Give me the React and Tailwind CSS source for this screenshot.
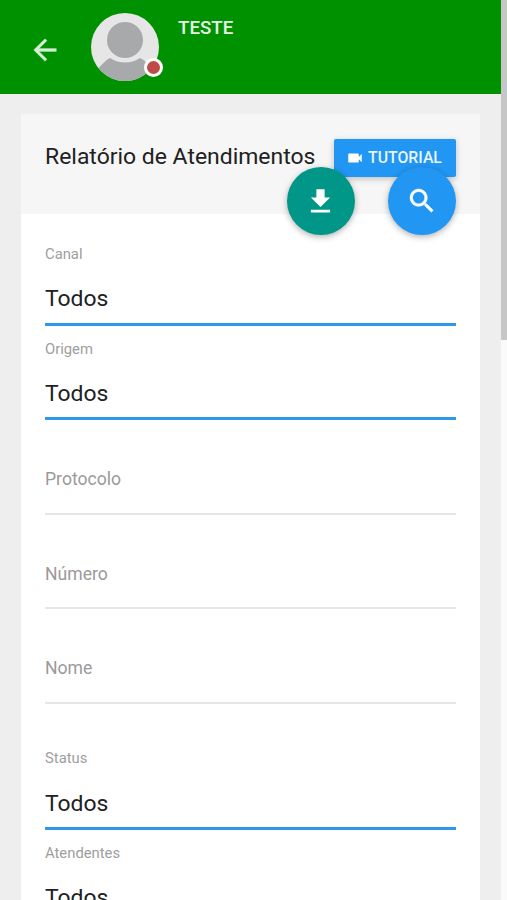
import React from 'react';
import { MdVideocam } from 'react-icons/md';

const fields = [
  { label: 'Canal', type: 'select' },
  { label: 'Origem', type: 'select' },
  { label: 'Protocolo', type: 'text' },
  { label: 'Número', type: 'text' },
  { label: 'Nome', type: 'text' },
  { label: 'Status', type: 'select', spaced: true },
  { label: 'Atendentes', type: 'select' },
];

const SelectField = ({ label, spaced }) => (
  <div className={`h-[94.6px] shrink-0 border-b-3 border-[#2f98ea] pt-[13px] ${spaced ? 'mt-[31.4px]' : ''}`}>
    <label className="block h-5 text-[14.8px] leading-5 text-[#9e9e9e]">{label}</label>
    <div className="mt-[20.3px] text-[22.9px] leading-[30px] text-[#212121]">Todos</div>
  </div>
);

const TextField = ({ label }) => (
  <div className="h-[94.6px] shrink-0 border-b-2 border-[#e6e6e6] pt-[47px]">
    <label className="block text-[17.6px] leading-6 text-[#9a9a9a]">{label}</label>
  </div>
);

const Avatar = () => (
  <div className="relative mt-[13px] ml-[33px] h-[68px] w-[68px]">
    <svg className="h-full w-full" viewBox="0 0 68 68">
      <defs>
        <clipPath id="avatar">
          <circle cx="34" cy="34" r="34" />
        </clipPath>
      </defs>
      <g clipPath="url(#avatar)">
        <rect width="68" height="68" fill="#e6e6e6" />
        <path d="M7 56C11 51 15 47 19 45C28 51 40 51 49 45C53 47 58 51 61 56V68H7Z" fill="#a7a9ab" />
        <circle cx="34" cy="27" r="18" fill="#a7a9ab" />
      </g>
    </svg>
    <span className="absolute top-[44.5px] left-[52.5px] h-[19px] w-[19px] rounded-full border-3 border-white bg-[#c04a45]"></span>
  </div>
);

const App = () => {
  return (
    <div className="flex h-screen overflow-hidden bg-[#eeeeee] font-['Roboto',sans-serif]">
      <div className="flex min-w-0 flex-1 flex-col">
        <header className="flex h-[94px] shrink-0 bg-[#009100] text-white">
          <button type="button" className="mt-[33px] ml-7 h-[34px] w-[34px] text-[#d6efd6]">
            <svg className="h-full w-full" viewBox="0 0 24 24" fill="currentColor" stroke="currentColor" strokeWidth="0.2">
              <path d="M20 11H7.83l5.59-5.59L12 4l-8 8 8 8 1.41-1.41L7.83 13H20v-2z" />
            </svg>
          </button>
          <div className="-ml-1">
            <Avatar />
          </div>
          <span className="mt-4 ml-[19px] text-[18.7px] leading-6 font-medium text-[#e6f5e6]">TESTE</span>
        </header>

        <main className="mx-[21px] mt-5 flex min-h-0 flex-1 flex-col overflow-hidden bg-white">
          <div className="relative h-[100px] shrink-0 bg-[#f6f6f6]">
            <div className="flex items-start justify-between pr-6 pl-6">
              <h1 className="mt-7 text-[22.95px] leading-[30px] whitespace-nowrap text-[#212121]">
                Relatório de Atendimentos
              </h1>
              <button
                type="button"
                className="mt-[25px] flex h-[38px] w-[122px] items-center justify-center gap-1 rounded-xs bg-[#2196f3] pr-0.5 text-[15.8px] font-medium text-[#e9f5ff] shadow-[0_2px_6px_rgba(0,0,0,0.22)]"
              >
                <MdVideocam size={18} className="text-white" />
                TUTORIAL
              </button>
            </div>
            <div className="absolute top-[53px] right-6 flex gap-[33.5px] text-white">
              <button type="button" className="flex h-[68px] w-[68px] items-center justify-center rounded-full bg-[#009688] shadow-[0_2px_6px_rgba(0,0,0,0.3)]">
                <svg className="h-[33px] w-[33px]" viewBox="0 0 24 24" fill="currentColor">
                  <path d="M19 9h-4V3H9v6H5l7 7 7-7zM5 18v2h14v-2H5z" />
                </svg>
              </button>
              <button type="button" className="flex h-[68px] w-[68px] items-center justify-center rounded-full bg-[#2196f3] shadow-[0_2px_6px_rgba(0,0,0,0.3)]">
                <svg className="h-8 w-8" viewBox="0 0 24 24" fill="currentColor" stroke="currentColor" strokeWidth="0.3">
                  <path d="M15.5 14h-.79l-.28-.27C15.41 12.59 16 11.11 16 9.5 16 5.91 13.09 3 9.5 3S3 5.91 3 9.5 5.91 16 9.5 16c1.61 0 3.09-.59 4.23-1.57l.27.28v.79l5 4.99L20.49 19l-4.99-5zm-6 0C7.01 14 5 11.99 5 9.5S7.01 5 9.5 5 14 7.01 14 9.5 11.99 14 9.5 14z" />
                </svg>
              </button>
            </div>
          </div>

          <form className="flex flex-col px-6 pt-[17px]">
            {fields.map((field) =>
              field.type === 'select' ? (
                <SelectField key={field.label} label={field.label} spaced={field.spaced} />
              ) : (
                <TextField key={field.label} label={field.label} />
              )
            )}
          </form>
        </main>
      </div>

      {/* scrollbar */}
      <div className="w-1.5 shrink-0 bg-[#fafafa]">
        <div className="h-[340px] bg-[#c6c6c6]"></div>
      </div>
    </div>
  );
};

export default App;
